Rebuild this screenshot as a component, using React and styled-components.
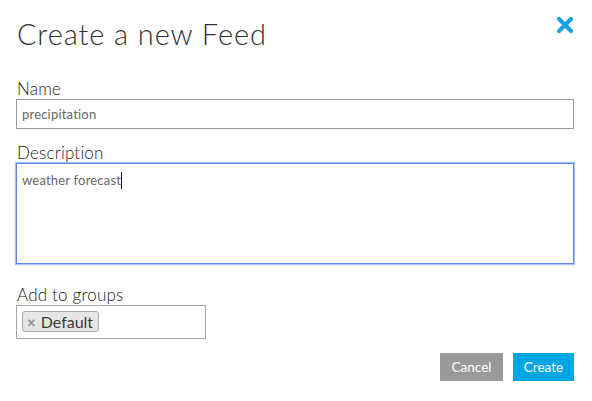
import React from 'react'
import styled, { createGlobalStyle } from 'styled-components'

const GlobalStyle = createGlobalStyle`
  * { box-sizing: border-box; }
  body {
    margin: 0;
    background: #ffffff;
    font-family: Lato, "Open Sans", sans-serif;
    color: #333333;
  }
`;

function App() {
  return (
    <Modal>
      <GlobalStyle />
      <Header>
        <Title>Create a new Feed</Title>
        <CloseButton aria-label="close">
          <svg width="18" height="18" viewBox="0 0 18 18">
            <path d="M3 3 L15 15 M15 3 L3 15" stroke="#1ba1e2" strokeWidth="4.2" strokeLinecap="round" />
          </svg>
        </CloseButton>
      </Header>

      <Field>
        <Label>Name</Label>
        <TextInput defaultValue="precipitation" />
      </Field>

      <Field>
        <Label>Description</Label>
        <TextArea>
          weather forecast<Caret />
        </TextArea>
      </Field>

      <Field $top={21}>
        <Label>Add to groups</Label>
        <GroupBox>
          <Tag>
            <TagRemove>×</TagRemove>
            Default
          </Tag>
        </GroupBox>
      </Field>

      <Footer>
        <Button $bg="#999999" $w={63}>Cancel</Button>
        <Button $bg="#00a6e4" $w={61}>Create</Button>
      </Footer>
    </Modal>
  )
}

const Modal = styled.div`
  width: 592px;
  height: 401px;
  padding: 16px 18px 0 16px;
  background: #ffffff;
`;

const Header = styled.div`
  display: flex;
  justify-content: space-between;
  align-items: flex-start;
  margin-bottom: 27px;
`;

const Title = styled.h1`
  margin: 0 0 0 1px;
  font-size: 29px;
  font-weight: 300;
  letter-spacing: 0.9px;
  line-height: 36px;
  color: #333333;
`;

const CloseButton = styled.button`
  border: none;
  background: none;
  padding: 0;
  margin: 0;
  width: 18px;
  height: 18px;
  cursor: pointer;
`;

const Field = styled.div`
  display: flex;
  flex-direction: column;
  margin-top: ${p => p.$top || 0}px;
  margin-bottom: 14px;
`;

const Label = styled.label`
  font-size: 17px;
  font-weight: 300;
  line-height: 20px;
  letter-spacing: 0.2px;
  margin-left: 1px;
  color: #222222;
`;

const TextInput = styled.input`
  width: 558px;
  height: 30px;
  border: 1px solid #9a9a9a;
  padding: 0 5px;
  font-family: Lato, sans-serif;
  font-size: 13px;
  letter-spacing: 0.2px;
  color: #666666;
  outline: none;
`;

const TextArea = styled.div`
  width: 558px;
  height: 101px;
  border: 1px solid #5b86e5;
  box-shadow: 0 0 1px 1px rgba(91, 134, 229, 0.5);
  padding: 8px 5px;
  font-size: 13px;
  letter-spacing: 0.2px;
  line-height: 16px;
  color: #666666;
`;

const Caret = styled.span`
  display: inline-block;
  width: 1px;
  height: 17px;
  background: #111111;
  vertical-align: top;
`;

const GroupBox = styled.div`
  width: 190px;
  height: 34px;
  border: 1px solid #a6a6a6;
  padding: 5px 5px;
`;

const Tag = styled.span`
  display: inline-flex;
  align-items: center;
  height: 21px;
  padding: 0 5px 0 4px;
  background: #e6e6e6;
  border: 1px solid #aaaaaa;
  border-radius: 3px;
  font-size: 16px;
  color: #3a3a3a;
`;

const TagRemove = styled.span`
  font-size: 15px;
  font-weight: 700;
  color: #888888;
  margin-right: 5px;
`;

const Footer = styled.div`
  display: flex;
  justify-content: flex-end;
  gap: 10px;
  margin-top: 6px;
`;

const Button = styled.button`
  width: ${p => p.$w}px;
  height: 28px;
  padding: 0;
  border: none;
  background: ${p => p.$bg};
  color: #ffffff;
  font-family: Lato, sans-serif;
  font-size: 13.5px;
  cursor: pointer;
`;

export default App
